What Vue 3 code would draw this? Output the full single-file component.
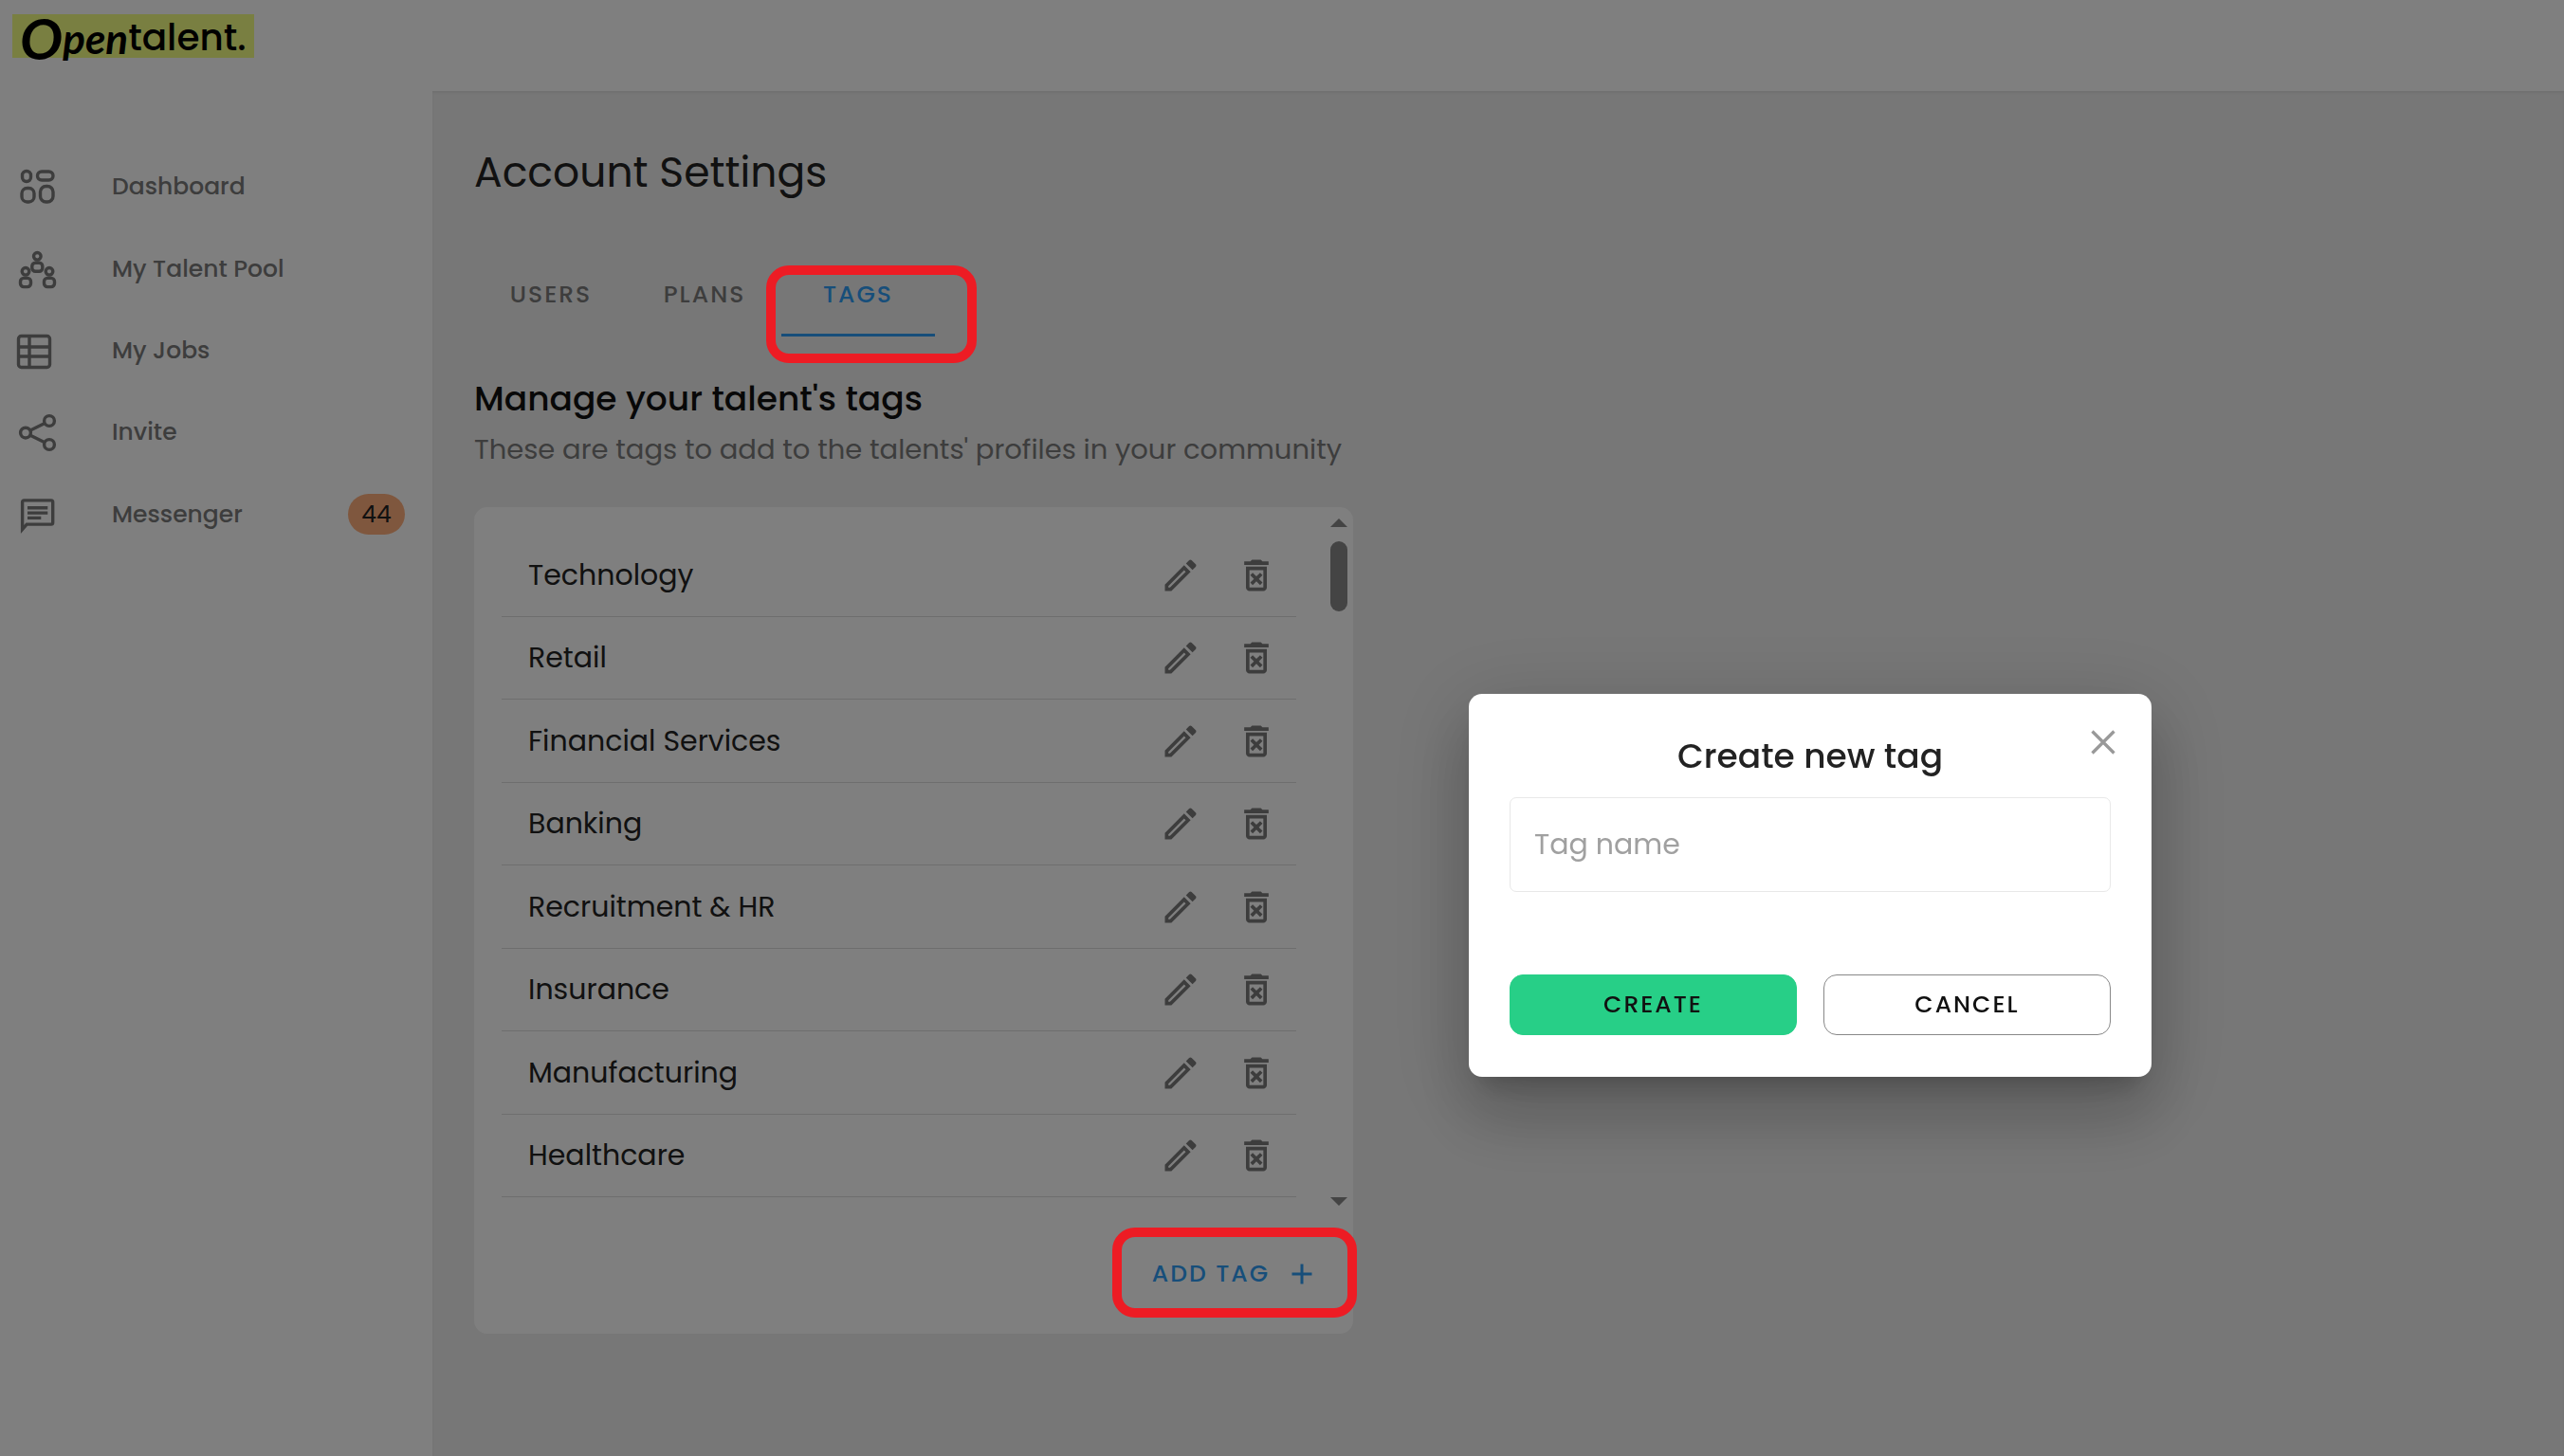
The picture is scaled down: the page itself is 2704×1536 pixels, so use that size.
<script setup>
import { ref } from 'vue'

const navItems = [
    { id: 'dashboard', label: 'Dashboard' },
    { id: 'pool', label: 'My Talent Pool' },
    { id: 'jobs', label: 'My Jobs' },
    { id: 'invite', label: 'Invite' },
    { id: 'messenger', label: 'Messenger', count: 44 }
]
const tabs = ['Users', 'Plans', 'Tags']
const activeTab = ref('Tags')
const tags = ref([
    'Technology',
    'Retail',
    'Financial Services',
    'Banking',
    'Recruitment & HR',
    'Insurance',
    'Manufacturing',
    'Healthcare'
])
const dialogOpen = ref(true)
const tagName = ref('')

const closeDialog = () => {
    dialogOpen.value = false
    tagName.value = ''
}
const createTag = () => {
    if (tagName.value) {
        tags.value.push(tagName.value)
    }
    closeDialog()
}
const removeTag = (tag) => {
    tags.value = tags.value.filter((item) => item !== tag)
}
</script>

<template>
    <div class="page">
        <header class="header">
            <a href="#" class="logo">
                <span class="logo-o">O</span>
                <span class="logo-pen">pen</span>
                <span class="logo-talent">talent.</span>
            </a>
        </header>
        <div class="body">
            <nav class="sidebar">
                <div class="nav-list">
                    <a v-for="item of navItems" :key="item.id" href="#" class="nav-item">
                        <svg class="nav-icon" viewBox="0 0 40 40">
                            <g v-if="item.id === 'dashboard'">
                                <rect x="4.5" y="3.5" width="9" height="11" rx="4.5" />
                                <rect x="20.5" y="4" width="16.5" height="9" rx="4.5" />
                                <rect x="4" y="21.5" width="13" height="14.5" rx="5.5" />
                                <rect x="23.5" y="19.5" width="13.5" height="16.5" rx="6" />
                            </g>
                            <g v-else-if="item.id === 'pool'">
                                <circle cx="20.3" cy="6.3" r="3.8" />
                                <rect x="14.8" y="13.2" width="11" height="9" rx="3.5" />
                                <circle cx="8" cy="22.3" r="3.8" />
                                <circle cx="33" cy="22.3" r="3.8" />
                                <rect x="2.5" y="29.4" width="11" height="9.2" rx="3.5" />
                                <rect x="27.5" y="29.4" width="11" height="9.2" rx="3.5" />
                            </g>
                            <g v-else-if="item.id === 'jobs'">
                                <rect x="0.5" y="4.5" width="33" height="33" rx="3" />
                                <path d="M12 4.5v33M0.5 16h33M0.5 26h33" />
                            </g>
                            <g v-else-if="item.id === 'invite'">
                                <circle cx="33" cy="8" r="5.4" />
                                <circle cx="8" cy="20.6" r="5.4" />
                                <circle cx="33" cy="33" r="5.4" />
                                <path d="M12.5 18.2L28.2 10.4M12.5 23L28.2 30.8" />
                            </g>
                            <g v-else>
                                <path d="M4.6 35.5V6.7q0-1.8 1.8-1.8h28.5q1.8 0 1.8 1.8v21.6q0 1.8-1.8 1.8H9.2z" />
                                <path d="M10 12.8h21.3M10 18.1h21.3M10 23.4h14.3" />
                            </g>
                        </svg>
                        <span class="nav-label">{{ item.label }}</span>
                        <span v-if="item.count" class="badge">{{ item.count }}</span>
                    </a>
                </div>
            </nav>
            <main class="content">
                <h1>Account Settings</h1>
                <div class="tabs" role="tablist">
                    <button
                        v-for="tab of tabs"
                        :key="tab"
                        class="tab"
                        :class="{ active: tab === activeTab }"
                        role="tab"
                        @click="activeTab = tab"
                    >
                        {{ tab }}
                        <span v-if="tab === 'Tags'" class="mark tab-mark"></span>
                    </button>
                </div>
                <section class="manage">
                    <h2>Manage your talent's tags</h2>
                    <p>These are tags to add to the talents' profiles in your community</p>
                    <div class="card">
                        <div class="scroll">
                            <ul class="list">
                                <li v-for="tag of tags" :key="tag">
                                    <span class="tag">{{ tag }}</span>
                                    <button class="icon-btn" :aria-label="'Edit ' + tag">
                                        <svg viewBox="0 0 24 24"><path d="M14.06 9.02l.92.92L5.92 19H5v-.92l9.06-9.06M17.66 3c-.25 0-.51.1-.7.29l-1.83 1.83 3.75 3.75 1.83-1.83c.39-.39.39-1.02 0-1.41l-2.34-2.34c-.2-.2-.45-.29-.71-.29zm-3.6 3.19L3 17.25V21h3.75L17.81 9.94l-3.75-3.75z" /></svg>
                                    </button>
                                    <button class="icon-btn" :aria-label="'Delete ' + tag" @click="removeTag(tag)">
                                        <svg viewBox="0 0 24 24"><path d="M14.12 10.47L12 12.59l-2.13-2.12-1.41 1.41L10.59 14l-2.12 2.12 1.41 1.41L12 15.41l2.12 2.12 1.41-1.41L13.41 14l2.12-2.12zM15.5 4l-1-1h-5l-1 1H5v2h14V4zM6 19c0 1.1.9 2 2 2h8c1.1 0 2-.9 2-2V7H6v12zM8 9h8v10H8V9z" /></svg>
                                    </button>
                                </li>
                            </ul>
                            <div class="scrollbar">
                                <svg viewBox="0 0 18 9"><path d="M9 0l9 9H0z" /></svg>
                                <div class="thumb"></div>
                                <svg viewBox="0 0 18 9"><path d="M0 0h18L9 9z" /></svg>
                            </div>
                        </div>
                        <div class="card-footer">
                            <button class="add-btn" @click="dialogOpen = true">
                                Add tag
                                <svg viewBox="0 0 24 24"><path d="M19 13h-6v6h-2v-6H5v-2h6V5h2v6h6v2z" /></svg>
                                <span class="mark add-mark"></span>
                            </button>
                        </div>
                    </div>
                </section>
            </main>
        </div>
        <div v-if="dialogOpen" class="backdrop">
            <form class="dialog" role="dialog" aria-labelledby="dialog-title" @submit.prevent="createTag">
                <button type="button" class="close" aria-label="Close" @click="closeDialog">
                    <svg viewBox="0 0 26 26"><path d="M1.5 1.5l23 23M24.5 1.5l-23 23" /></svg>
                </button>
                <h3 id="dialog-title">Create new tag</h3>
                <input v-model="tagName" type="text" placeholder="Tag name" aria-label="Tag name">
                <div class="actions">
                    <button type="submit" class="create">Create</button>
                    <button type="button" class="cancel" @click="closeDialog">Cancel</button>
                </div>
            </form>
        </div>
    </div>
</template>

<style>
body {
    margin: 0;
    background: #eee;
}
</style>

<style scoped>
* {
    box-sizing: border-box;
}

.page {
    display: flex;
    flex-direction: column;
    min-height: 100vh;
    font-family: Poppins, Inter, sans-serif;
    color: #222;
}

button,
input {
    font-family: inherit;
    color: inherit;
}

button {
    padding: 0;
    border: none;
    background: none;
    cursor: pointer;
}

a {
    color: inherit;
    text-decoration: none;
}

svg {
    display: block;
    flex: none;
    fill: currentColor;
}

.header {
    display: flex;
    height: 96px;
    padding: 15px 13px;
    background: #fff;
}

.logo {
    display: flex;
    align-items: center;
    height: 46px;
    padding: 3px 8px 0;
    background: #f3ff82;
    color: #000;
}

.logo-o,
.logo-pen {
    font-family: Lato, sans-serif;
    font-style: italic;
    font-weight: 700;
}

.logo-o {
    font-size: 60px;
    line-height: 72px;
}

.logo-pen {
    font-size: 44px;
    line-height: 56px;
}

.logo-talent {
    font-size: 39px;
    font-weight: 500;
    line-height: 64px;
}

.body {
    flex: 1;
    display: flex;
}

.sidebar {
    width: 456px;
    padding-top: 58px;
    background: #fff;
}

.nav-list {
    display: grid;
    grid-auto-rows: 1fr;
    height: 432px;
}

.nav-item {
    display: flex;
    align-items: center;
    padding: 0 29px 0 19px;
    color: #7a7a7a;
    font-size: 25px;
    font-weight: 500;
}

.nav-icon {
    width: 40px;
    height: 40px;
    overflow: visible;
    fill: none;
    stroke: currentColor;
    stroke-width: 3.4;
}

.nav-label {
    flex: 1;
    padding-left: 59px;
}

.badge {
    width: 60px;
    border-radius: 22px;
    background: #ffaf7d;
    color: #222;
    font-size: 25px;
    font-weight: 400;
    line-height: 43px;
    text-align: center;
}

.content {
    flex: 1;
    padding: 56px 44px;
    background: #eee;
    box-shadow: inset 0 2px 2px #e2e2e2;
}

h1,
h2,
h3,
p,
ul {
    margin: 0;
    padding: 0;
    font-weight: 400;
}

h1 {
    font-size: 44px;
    line-height: 60px;
}

.tabs {
    display: flex;
    margin-top: 57px;
}

.tab {
    position: relative;
    width: 162px;
    height: 86px;
    border-bottom: 3px solid transparent;
    color: #7a7a7a;
    font-size: 25px;
    font-weight: 500;
    letter-spacing: 2px;
    text-transform: uppercase;
}

.tab.active {
    border-bottom-color: #2f9df4;
    color: #2f9df4;
}

/* highlight rings stay above the backdrop */
.mark {
    position: absolute;
    z-index: 20;
    border: 10px solid #ed1c24;
    border-radius: 24px;
    pointer-events: none;
}

.tab-mark {
    inset: 11px -44px -31px -16px;
}

.manage {
    max-width: 927px;
    margin-top: 40px;
}

h2 {
    font-size: 36px;
    font-weight: 500;
    line-height: 52px;
    color: #111;
}

p {
    margin-top: 7px;
    font-size: 29px;
    line-height: 40px;
    color: #7a7a7a;
}

.card {
    margin-top: 41px;
    border-radius: 14px;
    background: #fff;
}

.scroll {
    display: flex;
    justify-content: space-between;
    padding: 12px 6px 0 29px;
}

.list {
    flex: 1;
    display: grid;
    grid-auto-rows: 1fr;
    height: 700px;
    margin: 16px 36px 0 0;
    list-style: none;
}

.list li {
    display: flex;
    align-items: center;
    gap: 36px;
    padding: 1px 20px 0 28px;
    border-bottom: 1px solid #dcdcdc;
}

.tag {
    flex: 1;
    font-size: 30px;
}

.icon-btn {
    color: #7a7a7a;
}

.icon-btn svg {
    width: 44px;
    height: 44px;
}

.scrollbar {
    display: flex;
    flex-direction: column;
    gap: 15px;
    width: 18px;
    margin-bottom: -9px;
    color: #888;
}

.scrollbar svg:last-child {
    margin-top: auto;
}

.thumb {
    height: 74px;
    border-radius: 9px;
    background: #888;
}

.card-footer {
    display: flex;
    justify-content: flex-end;
    padding: 49px 21px 31px;
}

.add-btn {
    position: relative;
    display: flex;
    align-items: center;
    gap: 16px;
    height: 64px;
    padding: 0 15px;
    color: #2f9df4;
    font-size: 25px;
    font-weight: 500;
    letter-spacing: 2px;
    text-transform: uppercase;
}

.add-btn svg {
    width: 36px;
    height: 36px;
}

.add-mark {
    inset: -17px -25px -14px -27px;
}

.backdrop {
    position: fixed;
    inset: 0;
    z-index: 10;
    display: flex;
    align-items: center;
    justify-content: center;
    padding: 332px 0 0 1114px;
    background: rgba(0, 0, 0, .5);
}

.dialog {
    position: relative;
    width: 720px;
    padding: 40px 43px 44px;
    border-radius: 14px;
    background: #fff;
    box-shadow: 0 20px 27px -13px rgba(0, 0, 0, .2), 0 43px 68px 5px rgba(0, 0, 0, .14), 0 16px 83px 14px rgba(0, 0, 0, .12);
}

.close {
    position: absolute;
    top: 38px;
    right: 38px;
    color: #999;
}

.close svg {
    width: 26px;
    height: 26px;
    stroke: currentColor;
    stroke-width: 3.3;
}

h3 {
    font-size: 36px;
    font-weight: 500;
    line-height: 52px;
    text-align: center;
}

input {
    display: block;
    width: 100%;
    height: 100px;
    margin-top: 17px;
    padding: 0 25px;
    border: 1px solid #e8e8e8;
    border-radius: 7px;
    font-size: 30px;
    outline: none;
}

input::placeholder {
    color: #a0a0a0;
    opacity: 1;
}

.actions {
    display: flex;
    gap: 28px;
    margin-top: 87px;
}

.actions button {
    flex: 1;
    height: 64px;
    border: 1px solid #888;
    border-radius: 14px;
    color: #111;
    font-size: 25px;
    font-weight: 500;
    letter-spacing: 2px;
    text-transform: uppercase;
}

.actions .create {
    border-color: #27cf87;
    background: #27cf87;
}
</style>
